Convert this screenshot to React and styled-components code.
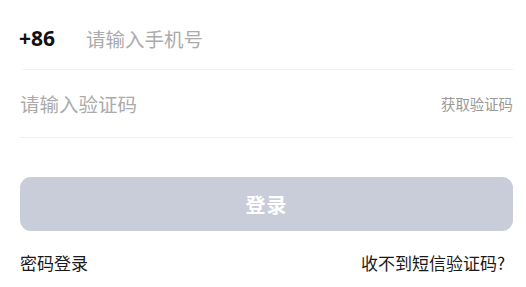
import styled, { createGlobalStyle } from "styled-components";

const GlobalStyle = createGlobalStyle`
    html, body {
        margin: 0;
        padding: 0;
        background: #ffffff;
        font-family: "Noto Sans CJK SC", "Noto Sans", sans-serif;
    }
`;

const App = () => {
    return (
        <>
            <GlobalStyle />
            <Page>
                <Field $top={7} $height={62} $indent={3}>
                    <Prefix>+86</Prefix>
                    <Input placeholder="请输入手机号" />
                </Field>
                <Field $top={0} $height={67}>
                    <Input placeholder="请输入验证码" />
                    <CodeLink>获取验证码</CodeLink>
                </Field>
                <Submit disabled>登录</Submit>
                <Links>
                    <Link>密码登录</Link>
                    <Link>收不到短信验证码?</Link>
                </Links>
            </Page>
        </>
    );
};

export default App;

const Page = styled.div`
    display: flex;
    flex-direction: column;
    padding: 0 13px 0 20px;
`;

const Field = styled.div`
    display: flex;
    align-items: center;
    height: ${(p) => p.$height}px;
    padding-top: ${(p) => p.$top}px;
    margin-left: ${(p) => p.$indent || 0}px;
    border-bottom: 1px solid #f0f0f0;
`;

const Prefix = styled.span`
    margin-left: -4px;
    width: 67px;
    flex-shrink: 0;
    font-family: "Noto Sans", "Noto Sans CJK SC", sans-serif;
    font-size: 21px;
    font-weight: 700;
    color: #111111;
`;

const Input = styled.input`
    flex: 1;
    min-width: 0;
    border: none;
    outline: none;
    padding: 0;
    background: transparent;
    font-family: inherit;
    font-size: 19.5px;
    color: #222222;

    &::placeholder {
        color: #ababab;
    }
`;

const CodeLink = styled.span`
    flex-shrink: 0;
    font-size: 14.4px;
    color: #999999;
`;

const Submit = styled.button`
    margin-top: 39px;
    height: 54px;
    border: none;
    border-radius: 11px;
    background: #c9ccd9;
    color: #ffffff;
    font-family: inherit;
    font-size: 20px;
    font-weight: 700;
    letter-spacing: 1px;
`;

const Links = styled.div`
    display: flex;
    justify-content: space-between;
    align-items: center;
    margin-top: 19px;
    padding-right: 8px;
`;

const Link = styled.span`
    font-size: 17px;
    color: #1a1a1a;
`;
